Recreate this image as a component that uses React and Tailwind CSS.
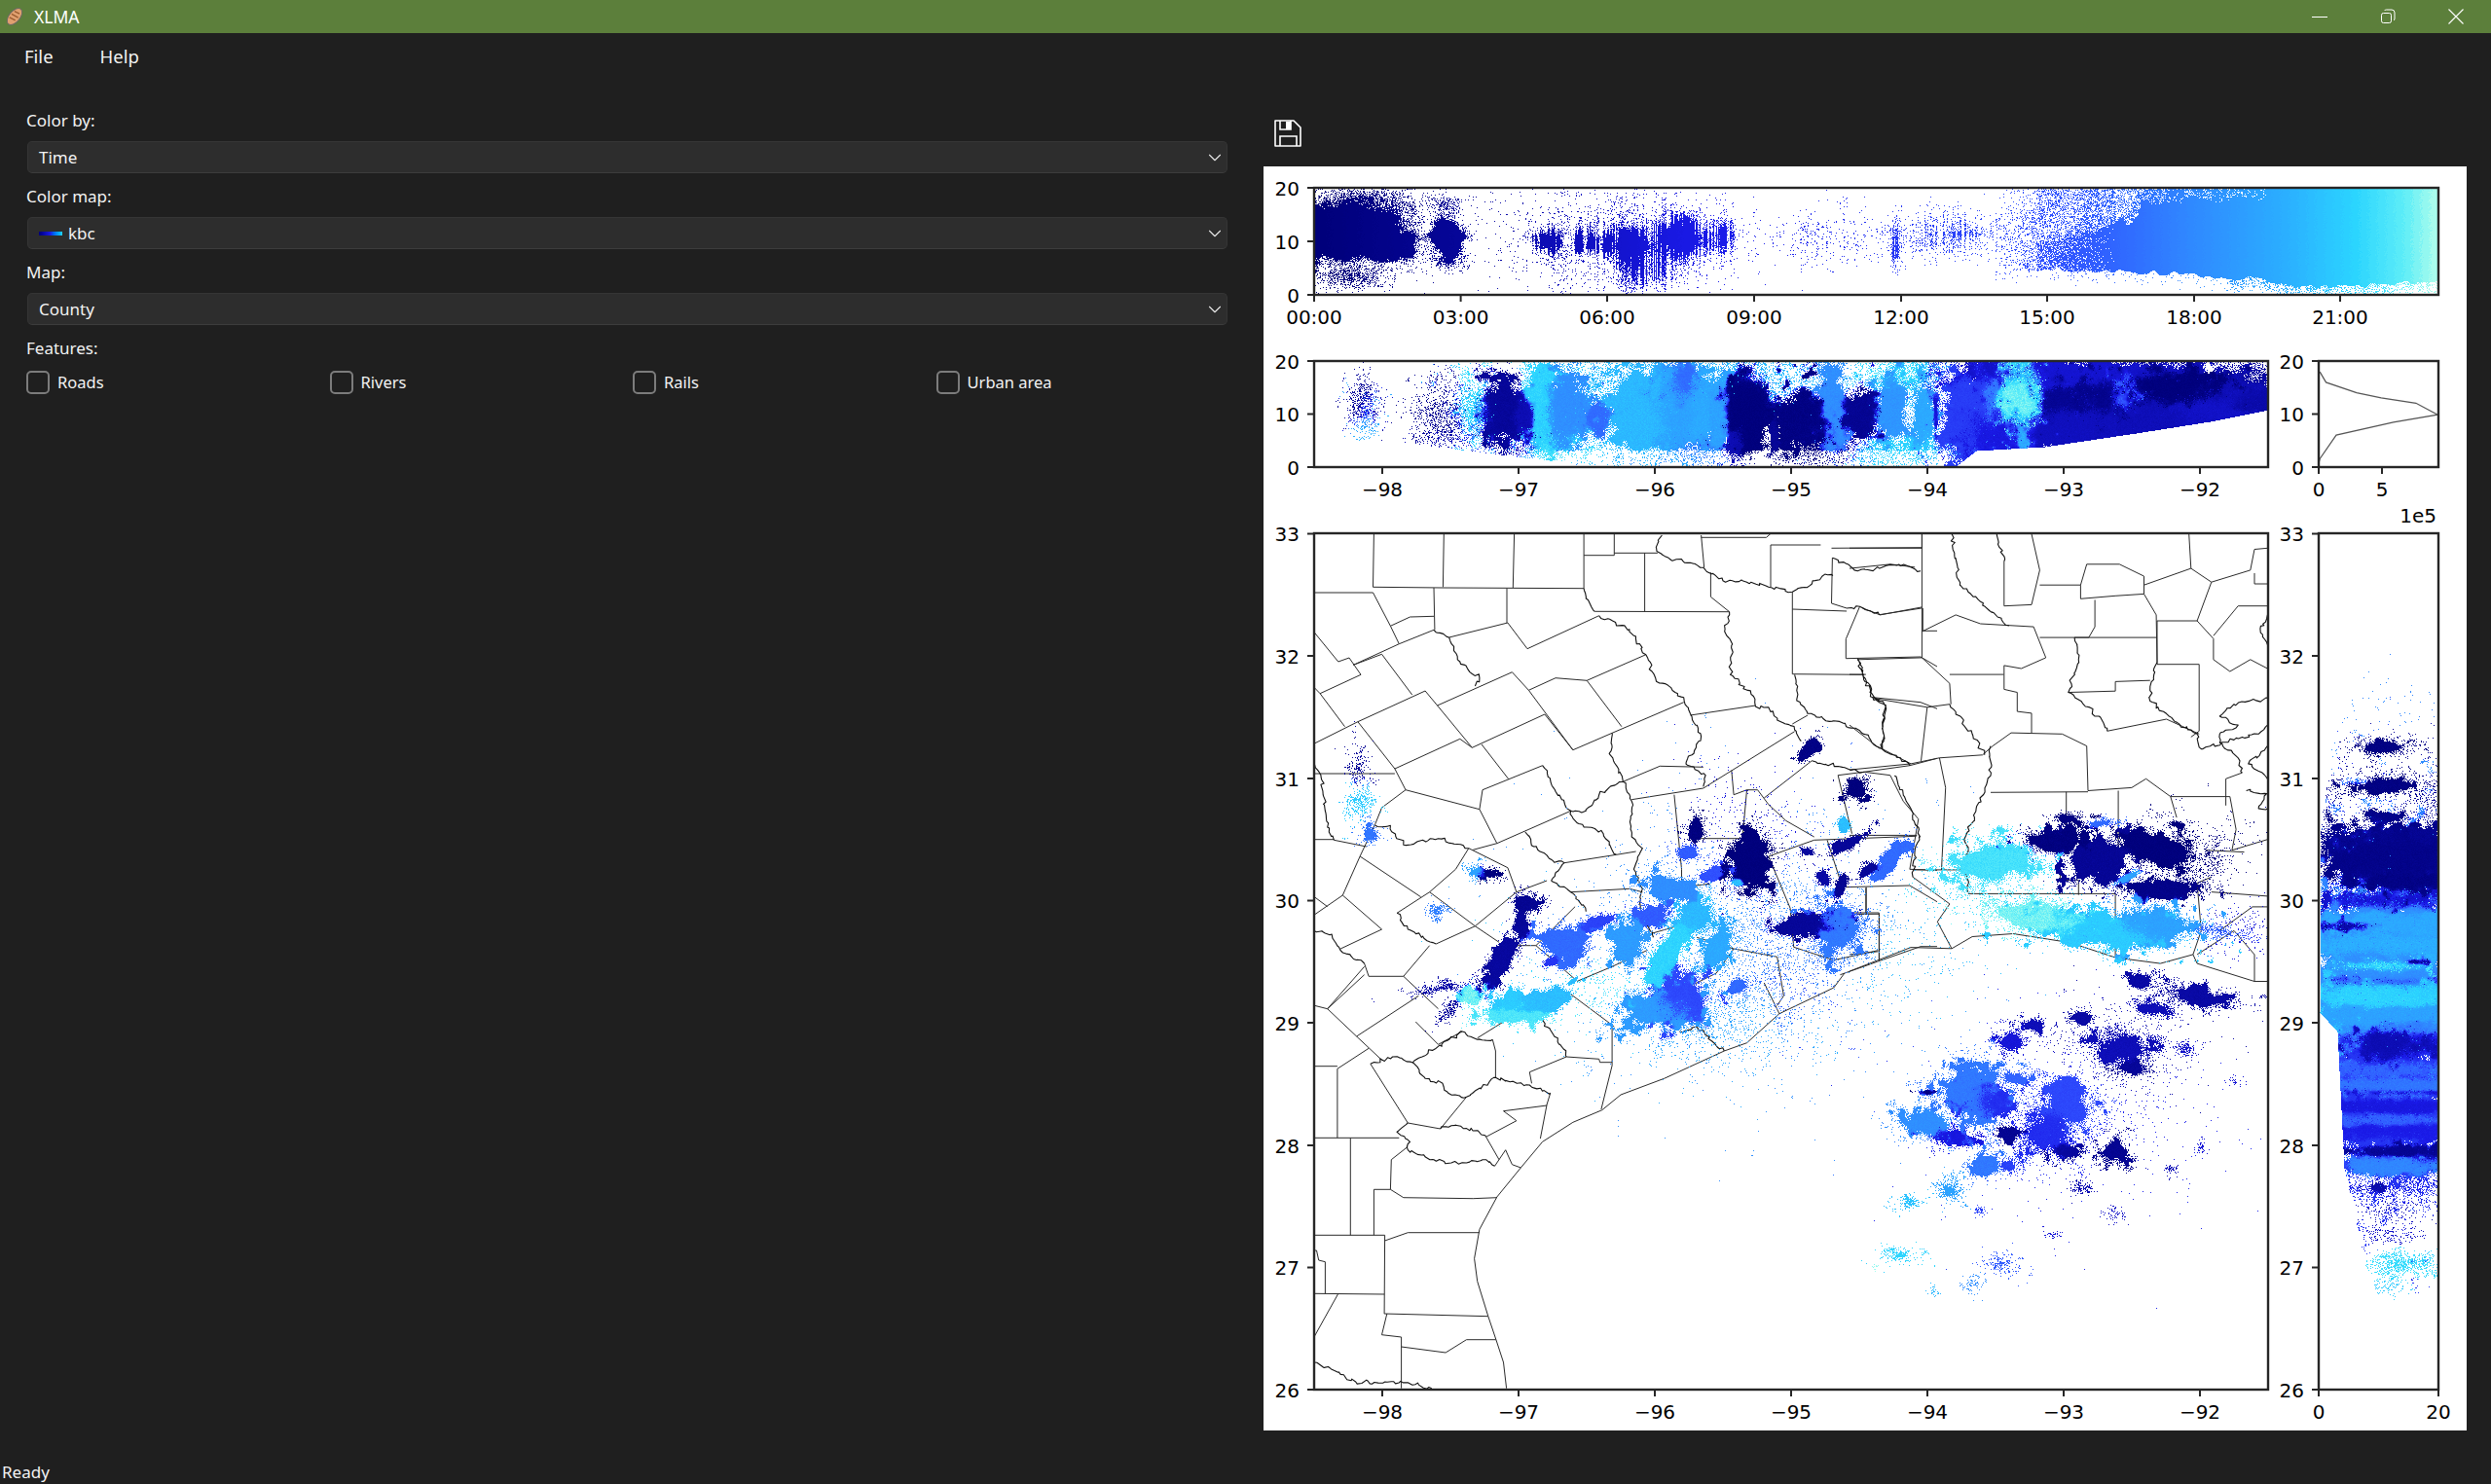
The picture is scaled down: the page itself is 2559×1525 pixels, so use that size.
import React, { useMemo } from 'react';
import { ChevronDown } from 'lucide-react';

// ---- scatter raster helpers ----
const mulberry = (seed) => () => {
  seed |= 0; seed = (seed + 0x6d2b79f5) | 0;
  let t = Math.imul(seed ^ (seed >>> 15), 1 | seed);
  t = (t + Math.imul(t ^ (t >>> 7), 61 | t)) ^ t;
  return ((t ^ (t >>> 14)) >>> 0) / 4294967296;
};
const hash = (x, y) => {
  const s = Math.sin(x * 127.1 + y * 311.7) * 43758.5453;
  return s - Math.floor(s);
};
const noise = (x, y) => {
  const xi = Math.floor(x), yi = Math.floor(y);
  let fx = x - xi, fy = y - yi;
  fx = fx * fx * (3 - 2 * fx); fy = fy * fy * (3 - 2 * fy);
  const a = hash(xi, yi), b = hash(xi + 1, yi), c = hash(xi, yi + 1), d = hash(xi + 1, yi + 1);
  return (a + (b - a) * fx + (c - a) * fy + (a - b - c + d) * fx * fy) * 2 - 1;
};
const lerpTable = (tab, v) => {
  if (v <= tab[0][0]) return tab[0][1];
  for (let i = 1; i < tab.length; i++) {
    if (v <= tab[i][0]) {
      const [a, b] = tab[i - 1], [c, d] = tab[i];
      return b + ((d - b) * (v - a)) / (c - a);
    }
  }
  return tab[tab.length - 1][1];
};

const STOPS = [
  [0, [0, 0, 122]], [0.15, [10, 10, 168]], [0.35, [26, 26, 232]], [0.55, [48, 80, 255]],
  [0.7, [48, 136, 255]], [0.82, [43, 176, 255]], [0.9, [43, 213, 255]], [0.96, [96, 238, 248]], [1, [180, 255, 236]],
];
const kbc = (t) => {
  const r = lerpTable(STOPS.map((s) => [s[0], s[1][0]]), t);
  const g = lerpTable(STOPS.map((s) => [s[0], s[1][1]]), t);
  const b = lerpTable(STOPS.map((s) => [s[0], s[1][2]]), t);
  return `rgb(${r | 0},${g | 0},${b | 0})`;
};

const BUCKETS = 96;

function rasterize({ x0, y0, w, h, blobs, field, mask, colorT, seed, soft = 1.5, rough = 1 }) {
  const prob = new Float32Array(w * h);
  const pick = new Float32Array(w * h);
  const toneSum = new Float32Array(w * h);
  const wsum = new Float32Array(w * h);
  const rand = mulberry(seed);
  blobs.forEach((b, i) => {
    const [cx, cy, rx, ry, t, a, rot = 0] = b;
    const r = Math.max(rx, ry) * 3;
    const c = Math.cos((rot * Math.PI) / 180), s = Math.sin((rot * Math.PI) / 180);
    const xa = Math.max(0, Math.floor(cx - r - x0)), xb = Math.min(w - 1, Math.ceil(cx + r - x0));
    const ya = Math.max(0, Math.floor(cy - r - y0)), yb = Math.min(h - 1, Math.ceil(cy + r - y0));
    const halo = a >= 1 ? Math.min(a, 2) * 0.05 : 0;
    for (let py = ya; py <= yb; py++) {
      for (let px = xa; px <= xb; px++) {
        const dx = px + x0 - cx, dy = py + y0 - cy;
        const u = (dx * c + dy * s) / rx, v = (-dx * s + dy * c) / ry;
        const d2 = u * u + v * v;
        if (d2 > 9) continue;
        const n = noise((px + i * 37) / 10, (py + i * 17) / 10) * 0.75 + noise((px + i * 11) / 4, (py + i * 5) / 4) * 0.4;
        const warp = Math.max(0.2, 1 + n * rough);
        const p = a * Math.exp(-soft * d2 * warp) + halo * Math.exp(-0.5 * d2 * warp);
        const k = py * w + px;
        prob[k] += p;
        const wt = p * p + 1e-7;
        wsum[k] += wt;
        toneSum[k] += t * wt;
        if (rand() < wt / wsum[k]) pick[k] = t;
      }
    }
  });
  const paths = Array.from({ length: BUCKETS }, () => []);
  for (let py = 0; py < h; py++) {
    let runB = -1, runX = 0;
    for (let px = 0; px <= w; px++) {
      let bucket = -1;
      if (px < w) {
        const k = py * w + px;
        const ax = px + x0, ay = py + y0;
        let p = prob[k];
        if (field) p += field(ax, ay);
        if (mask) p *= mask(ax, ay);
        if (rand() < p) {
          let t;
          if (colorT) t = colorT(ax, ay);
          else t = rand() < 0.25 ? pick[k] : toneSum[k] / (wsum[k] || 1);
          t = Math.max(0, Math.min(0.999, t + (rand() - 0.5) * (colorT ? 0.006 : 0.035)));
          bucket = Math.floor(t * BUCKETS);
        }
      }
      if (bucket !== runB) {
        if (runB >= 0) paths[runB].push(`M${runX + x0} ${py + y0}h${px - runX}v1h${runX - px}z`);
        runB = bucket; runX = px;
      }
    }
  }
  return paths.map((p) => p.join(''));
}

// ---- top panel: altitude against time ----
const colGain = new Float32Array(3000);
(() => {
  const r = mulberry(77);
  for (let x = 0; x < 3000; x++) {
    colGain[x] = x > 1570 && x < 2060 ? (r() < 0.35 ? 0.25 : 0.6 + r() * 1.3) : 1;
  }
})();
const topBlobs = [
  [1385, 240, 52, 25, 0, 9], [1425, 254, 18, 11, 0, 9], [1400, 206, 56, 16, 0, 0.8], [1446, 258, 7, 8, 0, 3],
  [1385, 284, 40, 12, 0, 0.6], [1425, 222, 18, 14, 0, 0.35], [1486, 243, 14, 17, 0, 9], [1486, 212, 16, 12, 0, 0.5], [1486, 268, 16, 8, 0, 0.9],
  [1590, 248, 13, 13, 0, 6], [1621, 248, 4, 12, 0, 6], [1634, 246, 4, 14, 0, 6], [1651, 250, 8, 12, 0, 7], [1677, 252, 17, 15, 0, 8],
  [1725, 243, 24, 18, 0, 7], [1690, 275, 28, 22, 0, 1.1], [1755, 245, 24, 15, 0, 1], [1660, 245, 120, 60, 0, 0.16],
  [1770, 240, 12, 22, 0, 0.5], [1870, 245, 50, 30, 0, 0.12], [1995, 240, 70, 26, 0, 0.3], [1947, 255, 5, 24, 0, 0.9], [2015, 240, 28, 7, 0, 0.45],
];
const topField = (x, y) => {
  if (x < 2050) return 0;
  const wob = noise(x / 9, y / 9);
  const bottom = lerpTable([[2093, 276], [2194, 279], [2312, 286], [2362, 295], [2505, 290]], x) + noise(x / 7, 3) * 3;
  const solidTop = lerpTable([[2093, 252], [2143, 234], [2190, 228], [2200, 208], [2335, 200], [2345, 193]], x) + wob * 8;
  const sparse = lerpTable([[2050, 0.04], [2093, 0.3], [2196, 0.5], [2200, 0.72], [2335, 0.8], [2360, 1]], x) * (1 + wob * 0.35);
  const solid = lerpTable([[2085, 0], [2093, 0.6], [2140, 0.85], [2175, 1]], x);
  if (y > bottom) return Math.max(0, (x > 2290 ? 0.42 : 0.06) * (1 - (y - bottom) / 16));
  if (x < 2093) return lerpTable([[2050, 0.02], [2090, 0.2]], x) * (y > 215 && y < 290 ? 1.3 : 0.6);
  return y < solidTop ? sparse : solid;
};
const TIME_TONE = [[0, 0], [0.13, 0.1], [0.32, 0.33], [0.5, 0.45], [0.69, 0.58], [0.85, 0.8], [0.91, 0.88], [1, 1]];
const topParams = {
  x0: 1351, y0: 194, w: 1153, h: 109, blobs: topBlobs, field: topField, seed: 3, soft: 2, rough: 0.55,
  mask: (x) => colGain[x],
  colorT: (x) => lerpTable(TIME_TONE, (x - 1350) / 1155),
};

// ---- middle panel: altitude against longitude ----
const lonBlobs = [
  [1400, 412, 13, 30, 0.1, 0.35], [1403, 428, 12, 26, 0.82, 0.3], [1477, 425, 24, 30, 0.08, 0.3], [1480, 450, 30, 12, 0.2, 0.2],
  [1515, 420, 22, 34, 0.92, 0.55], [1543, 420, 18, 24, 0.1, 3], [1566, 425, 9, 14, 0.18, 4], [1545, 440, 35, 30, 0.15, 0.3],
  [1582, 415, 15, 40, 0.9, 1.6], [1607, 420, 16, 30, 0.72, 3], [1590, 455, 32, 22, 0.93, 0.6], [1641, 428, 9, 15, 0.62, 2.4],
  [1630, 410, 40, 50, 0.88, 0.25], [1685, 422, 30, 38, 0.84, 3], [1715, 420, 20, 36, 0.78, 3], [1727, 395, 16, 18, 0.62, 3],
  [1745, 420, 11, 36, 0.8, 2.4], [1765, 425, 9, 36, 0.78, 3], [1745, 460, 40, 18, 0.68, 0.5], [1795, 420, 18, 30, 0.01, 6],
  [1785, 455, 9, 14, 0.18, 3], [1850, 430, 21, 20, 0.03, 6], [1822, 445, 3, 16, 0.1, 4], [1882, 425, 12, 34, 0.72, 3],
  [1910, 425, 14, 16, 0.08, 5], [1800, 390, 90, 36, 0.85, 0.35], [1860, 465, 50, 20, 0.04, 0.5], [1942, 418, 14, 30, 0.74, 2],
  [1976, 428, 12, 30, 0.8, 1.6], [1988, 425, 2, 16, 0.28, 2], [1950, 465, 50, 18, 0.9, 0.7], [1955, 385, 40, 24, 0.92, 0.5],
  [2022, 428, 22, 34, 0.48, 4], [2043, 418, 8, 30, 0.68, 3], [2076, 408, 20, 26, 0.97, 8], [2076, 445, 8, 14, 0.82, 4],
  [2040, 440, 28, 22, 0.32, 4], [2060, 380, 28, 11, 0.25, 2], [2110, 414, 20, 14, 0.08, 5], [2152, 411, 22, 17, 0.06, 6],
  [2125, 436, 42, 22, 0.22, 5], [2181, 411, 15, 20, 0.6, 2.5], [2234, 400, 38, 15, 0.01, 6], [2215, 432, 55, 18, 0.2, 6],
  [2110, 385, 80, 17, 0.28, 2], [2200, 382, 45, 11, 0.25, 1], [2295, 408, 42, 20, 0.2, 1.8], [2310, 385, 40, 18, 0.12, 0.45],
  [2322, 414, 20, 11, 0.15, 5], [2260, 425, 40, 18, 0.25, 4],
];
const lonBottom = [[1350, 440], [1395, 452], [1445, 455], [1540, 467], [1617, 476], [1640, 490], [1995, 490], [2030, 463], [2100, 459], [2194, 445], [2270, 433], [2330, 421]];
const lonParams = {
  x0: 1351, y0: 372, w: 979, h: 108, blobs: lonBlobs, seed: 11, soft: 1.3,
  mask: (x, y) => {
    if (y > lerpTable(lonBottom, x)) return 0;
    if (x > 1600 && x < 2000 && y > 462) return 0.42;
    return 1;
  },
};

// ---- right panel: latitude against altitude ----
const latBlobs = [
  [2450, 767, 16, 5, 0.03, 4], [2450, 767, 38, 11, 0.06, 0.22], [2446, 808, 19, 5, 0.03, 7], [2450, 808, 55, 15, 0.06, 0.18],
  [2450, 720, 50, 30, 0.7, 0.018], [2450, 839, 14, 4, 0.05, 4], [2455, 883, 50, 20, 0.05, 8], [2470, 905, 40, 7, 0.03, 5],
  [2450, 862, 70, 12, 0.08, 1.5], [2450, 925, 60, 9, 0.25, 1.5], [2455, 950, 70, 10, 0.8, 6], [2410, 951, 25, 4, 0.1, 8],
  [2455, 970, 70, 11, 0.82, 5], [2482, 988, 10, 3, 0.05, 5], [2450, 992, 40, 6, 0.95, 3], [2460, 1008, 60, 6, 0.3, 0.8],
  [2450, 1024, 70, 12, 0.9, 8], [2440, 1042, 70, 9, 0.78, 7], [2480, 1055, 35, 6, 0.7, 3], [2450, 1076, 26, 13, 0.18, 6],
  [2490, 1070, 30, 14, 0.2, 1.2], [2455, 1100, 55, 8, 0.62, 4], [2460, 1115, 60, 9, 0.66, 6], [2460, 1137, 60, 6, 0.32, 8],
  [2470, 1122, 40, 3, 0.25, 4], [2465, 1162, 55, 7, 0.35, 6], [2450, 1150, 50, 7, 0.62, 3], [2465, 1183, 44, 5, 0.08, 5],
  [2455, 1199, 44, 8, 0.7, 3], [2490, 1190, 20, 12, 0.2, 0.8], [2442, 1220, 10, 5, 0.15, 1.2], [2470, 1220, 45, 12, 0.4, 0.4],
  [2460, 1245, 40, 16, 0.2, 0.14], [2450, 1269, 30, 8, 0.25, 0.25], [2465, 1299, 34, 10, 0.92, 0.7], [2445, 1322, 20, 7, 0.88, 0.25],
  [2395, 880, 14, 60, 0.1, 0.22], [2395, 1040, 20, 40, 0.85, 1],
  [2450, 990, 70, 90, 0.72, 1.4], [2450, 1130, 70, 70, 0.45, 1.4], [2500, 850, 24, 60, 0.1, 0.2],
];
const latLeft = [[650, 2450], [760, 2395], [850, 2384], [1040, 2383], [1060, 2401], [1200, 2408], [1300, 2430], [1340, 2445]];
const latParams = {
  x0: 2383, y0: 549, w: 121, h: 878, blobs: latBlobs, seed: 23, soft: 1.5,
  mask: (x, y) => (x < lerpTable(latLeft, y) ? 0 : 1),
};

// ---- plan view storm cells ----
const mapBlobs = [
  [1395, 787, 9, 17, 0.1, 0.5], [1397, 823, 12, 16, 0.88, 0.55], [1407, 857, 8, 7, 0.65, 1.6], [1529, 897, 8, 4, 0.02, 2.5],
  [1519, 895, 7, 5, 0.78, 2], [1475, 935, 8, 6, 0.68, 1], [1567, 927, 9, 7, 0.08, 5], [1562, 945, 5, 12, 0.1, 4],
  [1545, 985, 7, 24, 0.12, 6, 30], [1480, 1015, 26, 5, 0.15, 0.8, -10], [1490, 1035, 6, 20, 0.12, 0.7, 45], [1607, 970, 17, 14, 0.62, 8],
  [1593, 988, 8, 4, 0.45, 5, -20], [1643, 947, 14, 4, 0.5, 5, -20], [1672, 967, 13, 18, 0.76, 6], [1696, 942, 12, 9, 0.58, 5],
  [1714, 912, 19, 9, 0.72, 6, 20], [1741, 943, 14, 13, 0.84, 6], [1711, 982, 9, 30, 0.9, 6, 32], [1763, 975, 8, 20, 0.8, 5, 30],
  [1786, 1012, 8, 6, 0.62, 3], [1741, 853, 7, 9, 0.02, 6], [1732, 875, 9, 6, 0.58, 4], [1797, 885, 14, 22, 0.01, 8, 10],
  [1759, 897, 11, 6, 0.55, 4, -25], [1785, 906, 5, 4, 0.86, 6], [1859, 767, 5, 11, 0.04, 6, 40], [1906, 810, 9, 8, 0.01, 8],
  [1893, 848, 4, 5, 0.85, 5], [1897, 868, 17, 4, 0.1, 5, -30], [1857, 875, 6, 3, 0.12, 3], [1917, 895, 9, 4, 0.1, 5, -40],
  [1890, 913, 4, 9, 0.08, 5, 25], [1873, 902, 5, 6, 0.14, 4], [1942, 883, 19, 5, 0.62, 6, -50], [1852, 950, 21, 7, 0.1, 7, -12],
  [1888, 953, 20, 20, 0.66, 4],
  [1705, 1037, 29, 13, 0.76, 7, -8], [1725, 1025, 19, 18, 0.52, 7], [1589, 1027, 19, 8, 0.85, 7, -15], [1553, 1030, 14, 7, 0.88, 6],
  [1553, 1043, 23, 7, 0.94, 5], [1511, 1023, 10, 7, 0.97, 5], [1615, 1008, 6, 2, 0.85, 5, -35],
  [2110, 865, 22, 9, 0.02, 7], [2152, 883, 22, 15, 0.09, 8], [2215, 871, 28, 12, 0.01, 7, 15], [2223, 913, 26, 8, 0.05, 7, -5],
  [2047, 886, 36, 15, 0.93, 4, -8], [2097, 944, 40, 11, 0.97, 5, 10], [2160, 956, 50, 12, 0.88, 7, 5], [2207, 950, 34, 13, 0.78, 6],
  [2123, 840, 9, 4, 0.03, 1.4], [2156, 846, 12, 3, 0.62, 2, -10], [2186, 901, 12, 4, 0.78, 3, -25], [2278, 956, 26, 6, 0.6, 0.6, 10],
  [2240, 880, 50, 30, 0.03, 0.28],
  [2198, 1008, 10, 6, 0.14, 3], [2261, 1024, 30, 8, 0.14, 2.4, 12], [2211, 1036, 20, 6, 0.2, 2, 8],
  [2137, 1045, 10, 6, 0.14, 4], [2089, 1053, 10, 5, 0.2, 3], [2066, 1070, 12, 9, 0.3, 3.5], [2181, 1076, 26, 15, 0.2, 1.8], [2190, 1097, 14, 7, 0.1, 2],
  [2026, 1122, 23, 21, 0.66, 5], [2043, 1131, 18, 13, 0.42, 6], [1980, 1155, 22, 10, 0.72, 3.5], [2005, 1168, 17, 7, 0.32, 3],
  [2070, 1108, 12, 5, 0.6, 4], [2120, 1119, 14, 8, 0.52, 4], [2123, 1137, 22, 16, 0.52, 1.8], [2102, 1165, 23, 18, 0.42, 1.8],
  [2123, 1183, 11, 6, 0.12, 4], [2062, 1165, 9, 6, 0.08, 3], [2039, 1198, 12, 9, 0.66, 5], [2064, 1198, 7, 6, 0.5, 2],
  [2173, 1183, 11, 9, 0.08, 2.6], [2137, 1220, 12, 7, 0.18, 0.6], [2173, 1247, 10, 7, 0.25, 0.4], [2261, 1180, 7, 6, 0.3, 0.5],
  [2232, 1201, 6, 4, 0.2, 0.6], [2003, 1223, 11, 9, 0.78, 1], [1961, 1235, 11, 6, 0.86, 0.8], [2034, 1244, 6, 4, 0.5, 0.8],
  [1952, 1290, 15, 8, 0.9, 0.8], [1925, 1302, 6, 4, 0.98, 0.35], [1986, 1324, 6, 5, 0.84, 0.5], [2055, 1299, 13, 9, 0.58, 0.55],
  [2026, 1318, 14, 7, 0.72, 0.28], [2108, 1269, 9, 4, 0.3, 0.4], [2245, 1079, 10, 6, 0.25, 0.6], [2295, 1112, 7, 4, 0.3, 0.3],
  [1980, 1122, 7, 2, 0.02, 4],
  // thin scatter round the cells
  [1800, 960, 110, 90, 0.72, 0.09], [1760, 1050, 90, 40, 0.8, 0.1], [1830, 1000, 60, 60, 0.5, 0.05], [1800, 850, 50, 50, 0.3, 0.04],
  [1640, 1010, 60, 30, 0.92, 0.08], [2070, 925, 70, 18, 0.9, 0.08], [2300, 955, 40, 22, 0.3, 0.1], [2120, 1150, 110, 70, 0.4, 0.04],
  [2180, 1080, 70, 50, 0.15, 0.03], [1950, 980, 70, 60, 0.85, 0.03], [1560, 975, 50, 50, 0.85, 0.012],
];
const mapParams = { x0: 1351, y0: 549, w: 979, h: 878, blobs: mapBlobs, seed: 41, soft: 1.5 };

// ---- county lines, read off the zoomed crops ----
const Z5 = `272,25 270,190|433,25 431,190|595,25 592,192|755,25 755,194|135,207 270,207|270,190 430,192 755,194|~755,194 760,225 780,265|780,265 1090,266|755,92 825,92 825,25|825,85 925,85|895,85 895,266|~935,30 922,70 950,100 1000,115 1030,130 1075,170 1130,175 1180,190 1235,205 1280,180 1310,150 1328,155|1025,30 1032,130|1025,37 1175,37 1185,25|1185,60 1300,60|1185,60 1185,190|1047,145 1047,220 1090,266|~1090,266 1080,320 1095,370 1092,460 1140,520 1150,558 1180,560 1200,600 1240,630 1255,665|1235,205 1235,458 1400,460|1235,258 1360,264|1325,70 1532,68|1327,100 1325,240 1360,255|~1360,255 1390,250 1435,275|1435,275 1532,255|~1327,100 1385,140 1440,130 1480,120 1530,140|1390,250 1358,350 1358,410 1530,405 1568,435|~1385,410 1420,530 1450,560 1442,690|1420,530 1530,545 1568,565|~1240,460 1245,540 1270,580 1380,625 1442,690 1505,740|1535,255 1535,325 1568,325|1270,585 1235,612|1533,25 1533,70|135,330 190,420 215,408 242,460 148,518 135,500|148,518 205,620|135,672 235,605 390,510 418,555 590,452 628,508 690,470 762,478 898,398|225,430 330,365 410,322|~410,322 445,345|445,345 580,300 625,380 790,278|~790,278 860,320 898,398|~445,345 470,420 515,470 505,495|270,207 310,310 330,365|310,310 355,282 410,280|410,192 412,322|578,194 578,300|290,397 360,522|225,430 290,397|235,605 320,750 345,815 515,875 555,980|320,750 470,658 498,685 665,582 730,692 820,640 985,545|418,555 498,685|628,508 730,692|762,478 842,620|520,675 582,782|515,875 522,815 660,740|~820,640 815,700 845,790 865,850 865,960 890,995 870,1060 890,1120 885,1180 915,1270|~898,398 920,470 985,530 1000,580 1025,650 990,735 1035,770 1030,805|1000,585 1150,555|1240,635 1030,810 865,845|~660,740 690,820 725,880 735,910 800,950 830,1015|~845,790 790,830 760,880 725,880|725,880 555,980|845,790 930,742 1030,745|1095,755 1100,830 1130,815 1155,815 1180,860 1220,910 1285,960|1280,725 1170,840|~1280,725 1400,760|1400,760 1505,740 1568,718|1340,770 1400,760 1460,770 1490,850 1525,905 1505,1060|1340,770 1372,950|963,830 980,1060 980,1115|1130,815 1120,965 1000,965|1285,970 1520,958|1180,1020 1285,970|1180,1020 1230,1180 1238,1300 1330,1340 1432,1310|1315,970 1350,1115 1505,1110|1505,1060 1568,1063|1505,1110 1568,1160|1405,1115 1405,1200|1238,1200 1435,1198 1435,1340|1345,1385 1430,1345 1530,1298 1568,1298|135,765 320,765|~135,735 150,770 155,830 165,930 180,970|180,970 255,990|135,968 180,968|345,815 290,870 275,920 240,1020 200,1140 135,1200|240,1020 380,1145|200,1140 290,1245|135,1145 165,1175|~275,925 310,925 340,985 420,965 490,995|490,995 580,1055 600,1130|555,980 500,1000|490,995 460,1060 400,1130 325,1195|~325,1195 350,1245 415,1290|415,1290 505,1235|400,1130 505,1235 560,1285|505,1235 600,1130 670,1095|~620,945 640,990 680,1030 710,1040|710,1040 830,1015 875,1005|~710,1040 680,1095|~680,1095 725,1130 760,1190|725,1130 860,1120 890,1130|~135,1250 175,1260 195,1310 250,1350|250,1350 260,1390 340,1390 400,1295|195,1305 290,1245|250,1360 165,1490|340,1390 420,1490|560,1295 645,1295 740,1405 820,1360 900,1310|645,1295 735,1175|980,1115 1045,1105|1000,1420 1060,1380 1100,1305 1200,1330 1215,1450 1200,1480|1015,1270 1100,1305|905,1260 970,1235`;
const Z6 = `165,110 250,5|135,100 165,110 232,195 375,70|232,195 290,268|260,232 188,295 188,508|135,287 188,287|~264,280 315,258 360,275 390,325 430,340 440,365 485,382|~485,382 552,322 630,345 678,370|678,370 670,405 655,510|264,280 350,462 425,480 485,382|~362,275 475,180 510,205 545,205|545,205 552,240 552,322|475,180 420,220 368,150|510,200 570,150|~655,140 695,200 715,258|715,258 790,265 792,275 820,275|715,258 630,305 635,340|820,165 820,285 795,420|720,60 825,165|570,425 670,408|570,425 600,455 530,505|~350,462 325,490 355,520 350,545 410,575 450,585 530,575 550,595|550,595 575,545 590,590 610,600|~425,480 450,470 510,485 530,505|530,505 560,575|135,508 330,508|218,508 218,808|272,808 272,667 310,667 340,692 500,695 555,692|310,667 312,575 350,535|135,808 297,808 296,1050 535,1058|297,825 350,800 515,800|135,988 296,990|160,988 160,890 145,885 140,855 135,855|190,988 135,1120|302,1050 290,1115 335,1122 335,1280|335,1152 437,1170 485,1130 553,1130|~135,1200 180,1225 230,1260 350,1262 405,1280|577,1280 570,1200 553,1130 535,1058 510,950 503,880 515,790 555,690 610,600 660,520 730,460 797,422 840,375 940,325 1078,240 1130,215 1205,125 1330,45 1355,0|1205,125 1170,30|~1078,240 1050,210 1015,165 975,180`;
const Z7 = `177,14 177,222|0,38 177,38|0,72 100,65 160,70|30,138 75,150 177,137|177,178 260,150 320,165 450,170 480,222 420,240 378,235 378,275 410,280 410,312 445,315 445,348|~250,14 270,100 390,168|~360,14 378,60|378,60 378,135 445,133 465,75 445,14|465,100 565,100 580,65 660,65 720,85 720,115 650,118 565,123 565,100|720,100 835,72 885,95 850,160 752,160 752,233 855,233 855,345 835,355|720,115 750,150 752,230|~752,230 735,270 735,295 800,330 850,350 860,375 910,365 950,390 960,415|960,415 920,425 920,470|830,14 835,72|600,125 600,170 585,188 465,188|752,188 550,188|~550,188 560,225 535,280 610,320 630,345|630,345 775,325 855,350|535,280 650,278 650,262 735,260|850,160 890,190 890,225 930,245 980,225 1022,240|890,185 950,135 1022,135|885,95 980,75 990,40 1022,38|990,80 990,98 1022,98|177,222 20,225|~20,225 50,280 85,300 80,375|80,375 150,400 220,390 325,385 350,370 395,348 520,350 580,370 583,445 690,440 725,425 785,455 800,490|0,250 40,250|60,290 190,305 175,395|190,305 245,300|~245,300 300,350 330,385|177,222 245,265 248,300|245,250 377,250|~345,370 345,420 285,520 290,615|220,390 235,440 225,578|345,448 583,447|530,447 530,520|657,445 657,540|~110,420 170,510 155,590|155,590 245,635 215,665 250,710|155,578 285,578|290,618 650,618|650,618 650,725|0,335 75,375|0,410 150,400|0,520 165,520|515,550 515,595 560,595 560,620|40,608 40,650|72,650 72,730|0,650 72,650|0,720 70,715|0,748 150,708 250,710 300,690 400,685 540,700 650,725 760,735 840,720 850,735 990,765 1022,765|840,720 860,680 850,600 885,590|785,455 930,455 945,510 935,545 1022,527|870,545 965,548|885,615 1022,622|905,680 985,640 1022,640|990,720 990,765|850,720 940,680 990,720|~1022,290 940,300 905,320 950,335 905,350 905,365 1000,350 1022,335|~1022,370 975,400 1022,425|~970,445 1020,450 1000,475 1022,475|~1022,150 1005,180 1022,200`;

const buildLines = () => {
  const sets = [
    [Z5, (x, y) => [1290 + x / 2.24, 540 + y / 3]],
    [Z6, (x, y) => [1290 + x / 2.24, 1000 + y / 3]],
    [Z7, (x, y) => [1900 + x / 2.38, 540 + y / 1.633]],
  ];
  let plain = '';
  let wavy = '';
  let seq = 0;
  sets.forEach(([src, conv]) => {
    src.split('|').forEach((raw) => {
      const isRiver = raw.startsWith('~');
      const pts = raw.replace('~', '').split(' ').map((p) => {
        const [a, b] = p.split(',').map(Number);
        return conv(a, b);
      });
      if (!isRiver) {
        plain += 'M' + pts.map((p) => `${p[0].toFixed(1)} ${p[1].toFixed(1)}`).join('L');
        return;
      }
      seq += 1;
      let d = `M${pts[0][0].toFixed(1)} ${pts[0][1].toFixed(1)}`;
      for (let i = 1; i < pts.length; i++) {
        const [ax, ay] = pts[i - 1], [bx, by] = pts[i];
        const steps = Math.max(1, Math.round(Math.hypot(bx - ax, by - ay) / 3));
        for (let s = 1; s <= steps; s++) {
          const f = s / steps;
          const jx = s === steps ? 0 : noise(ax / 3 + s * 0.9, seq) * 2.2;
          const jy = s === steps ? 0 : noise(ay / 3 + s * 0.9, seq + 9) * 2.2;
          d += `L${(ax + (bx - ax) * f + jx).toFixed(1)} ${(ay + (by - ay) * f + jy).toFixed(1)}`;
        }
      }
      wavy += d;
    });
  });
  return { plain, wavy };
};

// ---- chart pieces ----
const AXIS = '#262626';
const CHART_FONT = "'DejaVu Sans', sans-serif";

function Scatter({ paths }) {
  return (
    <g shapeRendering="crispEdges">
      {paths.map((d, i) => (d ? <path key={i} d={d} fill={kbc((i + 0.5) / BUCKETS)} /> : null))}
    </g>
  );
}

function Axes({ x0, x1, y0, y1, xticks = [], yticks = [] }) {
  return (
    <g>
      <rect x={x0} y={y0} width={x1 - x0} height={y1 - y0} fill="none" stroke={AXIS} strokeWidth="2.4" />
      {xticks.map(([x, label]) => (
        <g key={label}>
          <line x1={x} x2={x} y1={y1} y2={y1 + 7} stroke={AXIS} strokeWidth="2" />
          <text x={x} y={y1 + 30} textAnchor="middle" fontSize="20" fontFamily={CHART_FONT} fill="#000">{label}</text>
        </g>
      ))}
      {yticks.map(([y, label]) => (
        <g key={label}>
          <line x1={x0 - 7} x2={x0} y1={y} y2={y} stroke={AXIS} strokeWidth="2" />
          <text x={x0 - 15} y={y + 7.5} textAnchor="end" fontSize="20" fontFamily={CHART_FONT} fill="#000">{label}</text>
        </g>
      ))}
    </g>
  );
}

const LON_TICKS = [[1420, '−98'], [1560, '−97'], [1700, '−96'], [1840, '−95'], [1980, '−94'], [2120, '−93'], [2260, '−92']];
const TIME_TICKS = [[1350, '00:00'], [1500.6, '03:00'], [1651, '06:00'], [1802, '09:00'], [1953, '12:00'], [2103, '15:00'], [2254, '18:00'], [2404, '21:00']];
const LAT_TICKS = [[548.5, '33'], [674, '32'], [800, '31'], [925.5, '30'], [1051, '29'], [1177, '28'], [1302.5, '27'], [1428, '26']];
const HIST_PTS = [[1150, 1070], [1165, 1100], [1240, 1130], [1300, 1145], [1385, 1160], [1438, 1193], [1330, 1215], [1190, 1252], [1150, 1320], [1147, 1335]]
  .map(([x, y]) => `${(1900 + x / 2.38).toFixed(1)},${(y / 2.8).toFixed(1)}`).join(' ');

function LmaPlot() {
  const data = useMemo(() => ({
    top: rasterize(topParams),
    lon: rasterize(lonParams),
    lat: rasterize(latParams),
    map: rasterize(mapParams),
    lines: buildLines(),
  }), []);

  return (
    <svg viewBox="1298 171 1236 1299" className="block w-full h-full">
      <defs>
        <clipPath id="mapClip"><rect x="1350" y="548" width="980" height="880" /></clipPath>
      </defs>
      <g clipPath="url(#mapClip)" fill="none" stroke="#2a2a2a" strokeLinejoin="round">
        <path d={data.lines.plain} strokeWidth="1" />
        <path d={data.lines.wavy} strokeWidth="1.1" stroke="#111" />
      </g>
      <Scatter paths={data.top} />
      <Scatter paths={data.lon} />
      <Scatter paths={data.lat} />
      <Scatter paths={data.map} />
      <Axes x0={1350} x1={2505} y0={193} y1={303} xticks={TIME_TICKS} yticks={[[193, '20'], [248, '10'], [303, '0']]} />
      <Axes x0={1350} x1={2330} y0={371} y1={480} xticks={LON_TICKS} yticks={[[371, '20'], [425.5, '10'], [480, '0']]} />
      <polyline points={HIST_PTS} fill="none" stroke="#555" strokeWidth="1.2" />
      <Axes x0={2382} x1={2505} y0={371} y1={480} xticks={[[2382, '0'], [2447, '5']]} yticks={[[371, '20'], [425.5, '10'], [480, '0']]} />
      <text x="2503" y="537" textAnchor="end" fontSize="20" fontFamily={CHART_FONT} fill="#000">1e5</text>
      <Axes x0={1350} x1={2330} y0={548} y1={1428} xticks={LON_TICKS} yticks={LAT_TICKS} />
      <Axes x0={2382} x1={2505} y0={548} y1={1428} xticks={[[2382, '0'], [2505, '20']]} yticks={LAT_TICKS} />
    </svg>
  );
}

// ---- window chrome ----
const BreadIcon = () => (
  <svg viewBox="0 0 20 20" className="w-[20px] h-[20px] shrink-0">
    <g transform="rotate(40 10 10)">
      <ellipse cx="10" cy="10" rx="5.6" ry="10" fill="#e0a070" stroke="#6b6b60" strokeWidth="1" />
      <path d="M6.5 6 L12 4.5 M6 10 L13.5 8.5 M6.5 14 L13 12.5" stroke="#9a5c30" strokeWidth="1.4" />
    </g>
  </svg>
);

const SaveIcon = () => (
  <svg viewBox="0 0 28 28" className="w-[28px] h-[28px]" fill="none" stroke="#fff" strokeWidth="1.6">
    <path d="M1 1 H20 L27 8 V27 H1 Z" strokeLinejoin="round" />
    <path d="M6 1 V10 H17 V1" />
    <rect x="12" y="2" width="5" height="8" fill="#fff" stroke="none" />
    <path d="M6 27 V17 H23 V27" />
  </svg>
);

function WindowButton({ children }) {
  return <div className="w-[70px] h-full flex items-center justify-center">{children}</div>;
}

function TitleBar() {
  return (
    <div className="h-[34px] bg-[#5c7f3b] flex items-center shrink-0 pl-[5px] pr-px">
      <BreadIcon />
      <span className="ml-[10px] text-[17.5px] text-white">XLMA</span>
      <div className="ml-auto flex h-full">
        <WindowButton>
          <svg width="16" height="16" viewBox="0 0 16 16" stroke="#fff" strokeWidth="1"><path d="M0 8.5 H16" /></svg>
        </WindowButton>
        <WindowButton>
          <svg width="16" height="16" viewBox="0 0 16 16" fill="none" stroke="#fff" strokeWidth="1">
            <rect x="1.5" y="4.5" width="10" height="10" rx="2" />
            <path d="M4.5 2 Q5 1 6.5 1 H12 Q15 1 15 4 V10 Q15 11.5 14 12" />
          </svg>
        </WindowButton>
        <WindowButton>
          <svg width="16" height="16" viewBox="0 0 16 16" stroke="#fff" strokeWidth="1.1"><path d="M0.5 0.5 L15.5 15.5 M15.5 0.5 L0.5 15.5" /></svg>
        </WindowButton>
      </div>
    </div>
  );
}

function Combo({ children }) {
  return (
    <div className="ml-[1px] h-[33px] bg-[#2d2d2d] border border-[#353535] border-b-[#3c3c3c] rounded-[5px] flex items-center pl-[11px] pr-[1px] text-[17px] text-[#f2f2f2]">
      {children}
      <ChevronDown className="ml-auto w-[22px] h-[22px] text-[#e8e8e8]" strokeWidth={1.2} />
    </div>
  );
}

function Field({ label, children }) {
  return (
    <div className="mb-[13px]">
      <div className="h-[22px] mb-[10px] flex items-center text-[17px] text-[#f2f2f2]">{label}</div>
      {children}
    </div>
  );
}

function Check({ label }) {
  return (
    <label className="flex items-center gap-[8px] text-[16.5px] text-[#f2f2f2]">
      <span className="w-[24px] h-[24px] rounded-[5px] border-2 border-[#7c7c7c] bg-[#1f1f1f]" />
      {label}
    </label>
  );
}

export default function App() {
  return (
    <div className="w-screen h-screen bg-[#1f1f1f] flex flex-col overflow-hidden font-['Noto_Sans',sans-serif]">
      <TitleBar />
      <div className="h-[48px] shrink-0 flex items-center pl-[25px] gap-[48px] text-[18.5px] text-[#f2f2f2]">
        <span>File</span>
        <span>Help</span>
      </div>
      <div className="flex-1 flex min-h-0">
        <div className="w-[1298px] shrink-0 pl-[27px] pr-[37px] pt-[31px]">
          <Field label="Color by:"><Combo>Time</Combo></Field>
          <Field label="Color map:">
            <Combo>
              <span className="w-[24px] h-[4px] mr-[6px] bg-gradient-to-r from-[#00007a] via-[#1a1ae8] to-[#2bd5ff]" />
              kbc
            </Combo>
          </Field>
          <Field label="Map:"><Combo>County</Combo></Field>
          <div className="h-[22px] mb-[12px] flex items-center text-[17px] text-[#f2f2f2]">Features:</div>
          <div className="grid grid-cols-[repeat(4,311.5px)]">
            <Check label="Roads" />
            <Check label="Rivers" />
            <Check label="Rails" />
            <Check label="Urban area" />
          </div>
        </div>
        <div className="w-[1236px] shrink-0 pt-[41px]">
          <div className="pl-[11px] mb-[20px] h-[28px]"><SaveIcon /></div>
          <div className="h-[1299px] bg-white"><LmaPlot /></div>
        </div>
      </div>
      <div className="h-[24px] shrink-0 flex items-center pl-[2px] text-[17px] text-[#f2f2f2]">Ready</div>
    </div>
  );
}
